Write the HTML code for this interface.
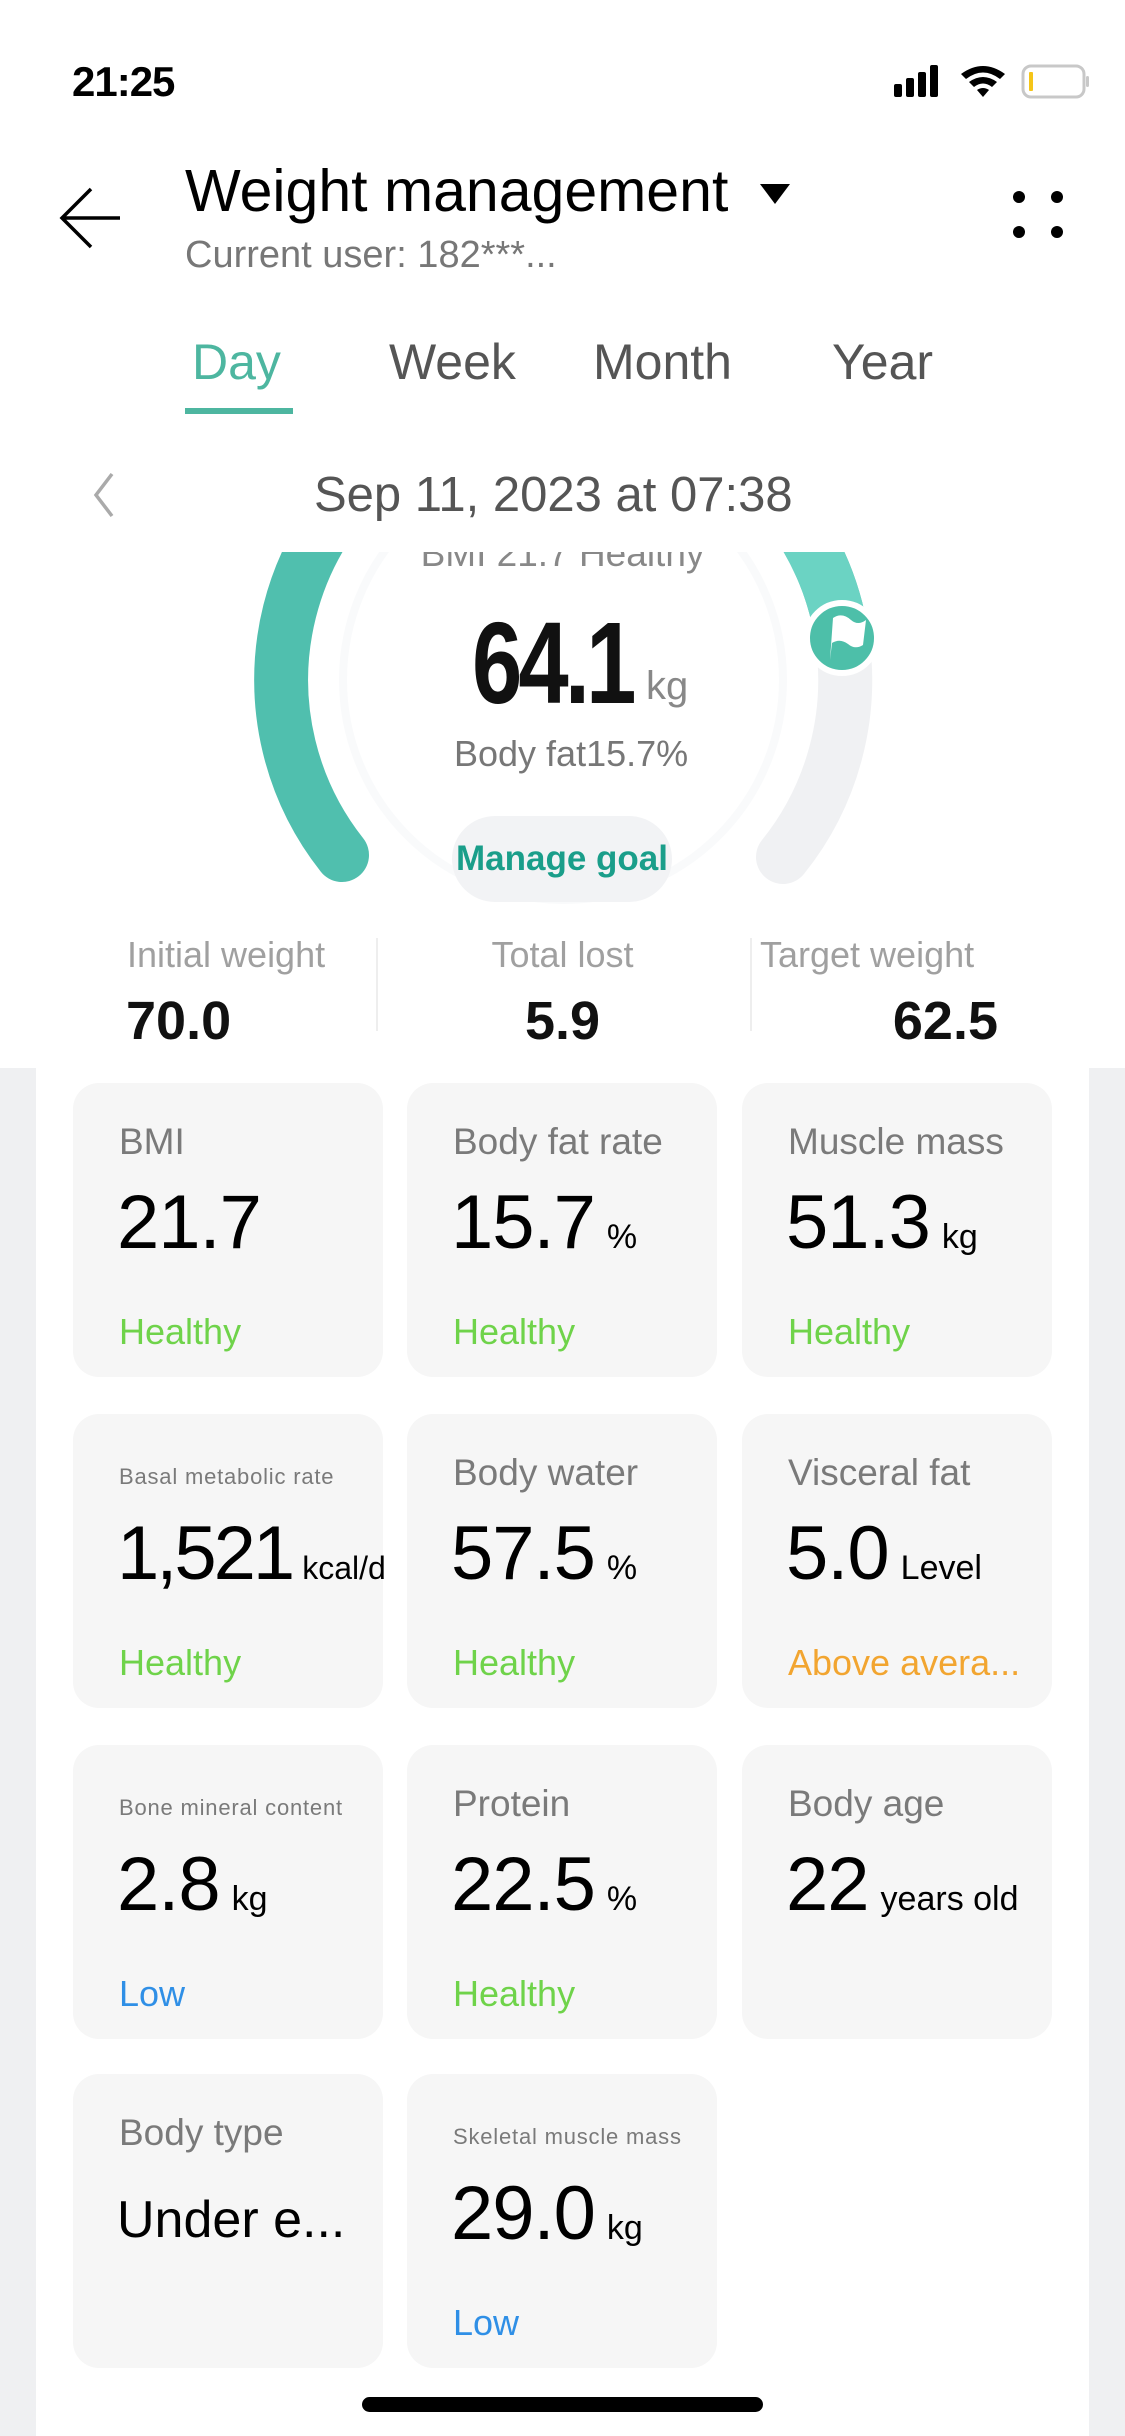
<!DOCTYPE html>
<html><head><meta charset="utf-8"><style>
*{margin:0;padding:0;box-sizing:border-box}
body{width:1125px;height:2436px;position:relative;background:#fff;font-family:"Liberation Sans",sans-serif;overflow:hidden}
.a{position:absolute;white-space:nowrap}
.side{position:absolute;top:1068px;width:36px;height:1368px;background:#eff0f2}
.card{position:absolute;width:310px;height:294px;background:#f6f6f6;border-radius:26px}
.card .l{position:absolute;left:46px;top:38px;font-size:37px;color:#7a7a7a}
.card .ls{position:absolute;left:46px;top:50px;font-size:22px;color:#7a7a7a;letter-spacing:0.8px}
.card .v{position:absolute;left:44px;top:96px;font-size:76px;color:#000;letter-spacing:-1px}
.card .v span{font-size:34px;letter-spacing:0;margin-left:12px}
.card .s{position:absolute;left:46px;top:228px;font-size:36px}
.g{color:#6fd34a}.o{color:#f2a530}.b{color:#2f8fe6}
</style></head><body>
<div class="a" style="left:72px;top:58px;font-size:42px;font-weight:bold;color:#000;letter-spacing:-1px">21:25</div>
<svg class="a" style="left:890px;top:62px" width="200" height="40" viewBox="0 0 200 40">
<rect x="4" y="22" width="8" height="13" rx="2" fill="#000"/><rect x="16" y="16" width="8" height="19" rx="2" fill="#000"/><rect x="28" y="10" width="8" height="25" rx="2" fill="#000"/><rect x="40" y="3" width="8" height="32" rx="2" fill="#000"/>
<path d="M71 12 Q93 -4 115 12 L110 17 Q93 4 76 17Z" fill="#000"/><path d="M79 20 Q93 10 107 20 L102 25 Q93 18 84 25Z" fill="#000"/><path d="M87 28 Q93 24 99 28 L93 35Z" fill="#000"/>
<rect x="133" y="4" width="61" height="31" rx="8" fill="none" stroke="#c8c8c8" stroke-width="3"/><rect x="139" y="10" width="4" height="19" rx="1" fill="#f5c518"/><rect x="196" y="14" width="3" height="11" rx="1.5" fill="#c8c8c8"/>
</svg>
<svg class="a" style="left:58px;top:185px" width="70" height="70" viewBox="0 0 70 70"><path d="M62 33 H6 M33 4 L4 33 L33 62" fill="none" stroke="#000" stroke-width="3.5"/></svg>
<div class="a" style="left:185px;top:157px;font-size:59px;color:#000">Weight management</div>
<svg class="a" style="left:758px;top:182px" width="34" height="24"><path d="M2 2 H32 L17 22Z" fill="#000"/></svg>
<div class="a" style="left:185px;top:234px;font-size:38px;color:#777">Current user: 182***...</div>
<svg class="a" style="left:1005px;top:185px" width="70" height="60"><circle cx="14" cy="12" r="6" fill="#000"/><circle cx="52" cy="12" r="6" fill="#000"/><circle cx="14" cy="47" r="6" fill="#000"/><circle cx="52" cy="47" r="6" fill="#000"/></svg>
<div class="a" style="left:192px;top:333px;font-size:50px;color:#4db6a0">Day</div>
<div class="a" style="left:389px;top:333px;font-size:50px;color:#555">Week</div>
<div class="a" style="left:593px;top:333px;font-size:50px;color:#555">Month</div>
<div class="a" style="left:832px;top:333px;font-size:50px;color:#555">Year</div>
<div class="a" style="left:185px;top:408px;width:108px;height:6px;background:#4db6a0"></div>
<svg class="a" style="left:88px;top:470px" width="30" height="50"><path d="M24 4 L8 25 L24 46" fill="none" stroke="#aaa" stroke-width="3.5"/></svg>
<div class="a" style="left:314px;top:467px;font-size:49px;color:#555">Sep 11, 2023 at 07:38</div>
<svg class="a" style="left:0;top:0" width="1125" height="1000" viewBox="0 0 1125 1000">
<defs><clipPath id="c"><rect x="0" y="552" width="1125" height="448"/></clipPath></defs>
<g clip-path="url(#c)">
<circle cx="563" cy="680" r="220" fill="none" stroke="#f9fafb" stroke-width="8"/>
<path d="M842 638 A282 282 0 0 1 783 857" fill="none" stroke="#f0f1f3" stroke-width="54" stroke-linecap="round"/>
<path d="M342 855 A282 282 0 1 1 842 638" fill="none" stroke="#50bfae" stroke-width="54" stroke-linecap="round"/>
<path d="M659 415 A282 282 0 0 1 842 638" fill="none" stroke="#6bd3c3" stroke-width="54"/>
<circle cx="842" cy="638" r="35" fill="#4dbfa9" stroke="#fff" stroke-width="6"/>
<path d="M830 660 L833 618 Q842 612 851 620 Q858 626 866 620 L863 645 Q855 650 848 644 Q840 638 832 643" fill="#fff"/>
</g></svg>
<div class="a" style="left:0;width:1125px;text-align:center;top:533px;font-size:37px;color:#888;clip-path:inset(19px 0 0 0)">BMI 21.7 Healthy</div>
<div class="a" style="left:472px;top:596px;font-size:116px;font-weight:bold;color:#111;letter-spacing:-5px;transform:scaleX(0.78);transform-origin:left">64.1</div>
<div class="a" style="left:646px;top:664px;font-size:40px;color:#888">kg</div>
<div class="a" style="left:454px;top:733px;font-size:36px;color:#777">Body fat15.7%</div>
<div class="a" style="left:452px;top:816px;width:220px;height:86px;border-radius:43px;background:#f2f3f5"></div>
<div class="a" style="left:450px;top:839px;width:224px;text-align:center;font-size:35px;font-weight:bold;color:#1a9e8a">Manage goal</div>
<div class="a" style="left:127px;top:934px;font-size:36px;color:#a0a0a0">Initial weight</div>
<div class="a" style="left:126px;top:990px;font-size:54px;font-weight:bold;color:#111">70.0</div>
<div class="a" style="left:0;width:1125px;text-align:center;top:934px;font-size:36px;color:#a0a0a0">Total lost</div>
<div class="a" style="left:0;width:1125px;text-align:center;top:990px;font-size:54px;font-weight:bold;color:#111">5.9</div>
<div class="a" style="left:760px;top:934px;font-size:36px;color:#a0a0a0">Target weight</div>
<div class="a" style="left:700px;width:298px;text-align:right;top:990px;font-size:54px;font-weight:bold;color:#111">62.5</div>
<div class="a" style="left:376px;top:938px;width:2px;height:93px;background:#eee"></div>
<div class="a" style="left:750px;top:938px;width:2px;height:93px;background:#eee"></div>
<div class="side" style="left:0"></div><div class="side" style="left:1089px"></div>

<div class="card" style="left:73px;top:1083px"><div class="l">BMI</div><div class="v">21.7</div><div class="s g">Healthy</div></div>
<div class="card" style="left:407px;top:1083px"><div class="l">Body fat rate</div><div class="v">15.7<span>%</span></div><div class="s g">Healthy</div></div>
<div class="card" style="left:742px;top:1083px"><div class="l">Muscle mass</div><div class="v">51.3<span>kg</span></div><div class="s g">Healthy</div></div>

<div class="card" style="left:73px;top:1414px"><div class="ls">Basal metabolic rate</div><div class="v" style="letter-spacing:-3px">1,521<span style="margin-left:10px;font-size:32px">kcal/d</span></div><div class="s g">Healthy</div></div>
<div class="card" style="left:407px;top:1414px"><div class="l">Body water</div><div class="v">57.5<span>%</span></div><div class="s g">Healthy</div></div>
<div class="card" style="left:742px;top:1414px"><div class="l">Visceral fat</div><div class="v">5.0<span>Level</span></div><div class="s o">Above avera...</div></div>

<div class="card" style="left:73px;top:1745px"><div class="ls">Bone mineral content</div><div class="v">2.8<span>kg</span></div><div class="s b">Low</div></div>
<div class="card" style="left:407px;top:1745px"><div class="l">Protein</div><div class="v">22.5<span>%</span></div><div class="s g">Healthy</div></div>
<div class="card" style="left:742px;top:1745px"><div class="l">Body age</div><div class="v">22<span>years old</span></div></div>

<div class="card" style="left:73px;top:2074px"><div class="l">Body type</div><div class="v" style="font-size:52px;top:116px;letter-spacing:0">Under e...</div></div>
<div class="card" style="left:407px;top:2074px"><div class="ls">Skeletal muscle mass</div><div class="v">29.0<span>kg</span></div><div class="s b">Low</div></div>

<div class="a" style="left:362px;top:2397px;width:401px;height:15px;border-radius:8px;background:#000"></div>
</body></html>
